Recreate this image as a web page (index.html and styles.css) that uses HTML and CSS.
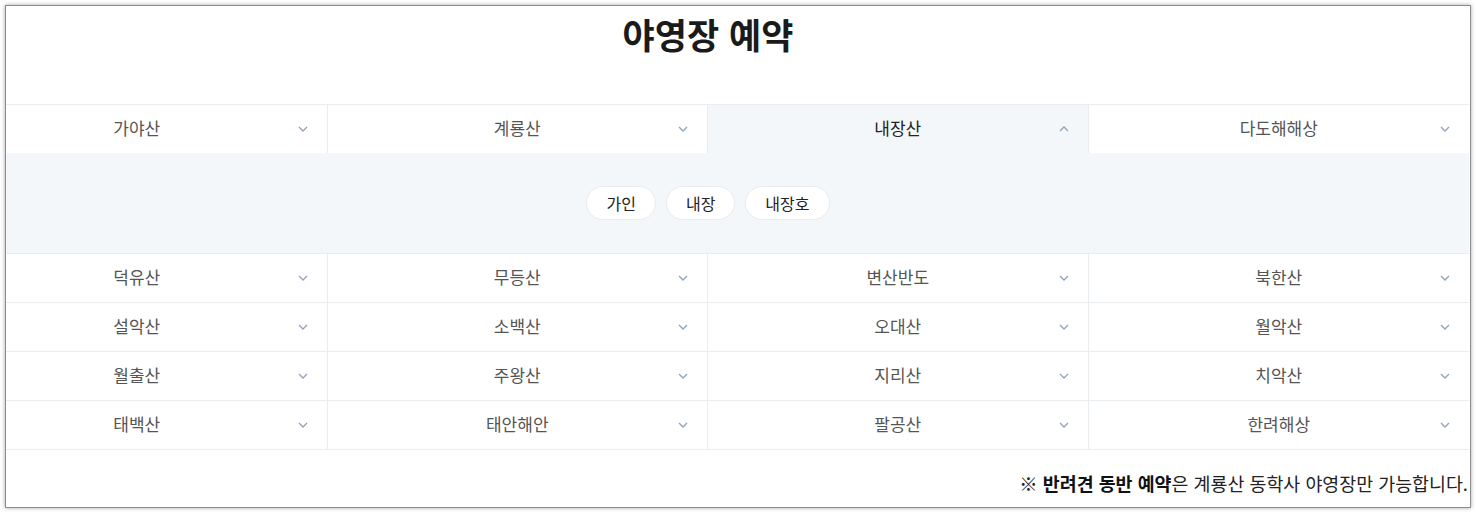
FILE: index.html
```html
<!DOCTYPE html>
<html lang="ko">
<head>
    <meta charset="UTF-8">
    <meta name="viewport" content="width=device-width, initial-scale=1.0">
    <title>야영장 예약</title>
    <link rel="stylesheet" href="styles.css">
</head>
<body>
    <div class="window">
        <div class="page">
            <h1 class="title">야영장 예약</h1>

            <div class="park-list">
                <div class="row is-open">
                    <div class="cell"><span></span><span class="label">가야산</span><svg class="chev" viewBox="0 0 10 6"><path d="M1 1l4 4 4-4"/></svg></div>
                    <div class="cell"><span></span><span class="label">계룡산</span><svg class="chev" viewBox="0 0 10 6"><path d="M1 1l4 4 4-4"/></svg></div>
                    <div class="cell active"><span></span><span class="label">내장산</span><svg class="chev" viewBox="0 0 10 6"><path d="M1 5l4-4 4 4"/></svg></div>
                    <div class="cell"><span></span><span class="label">다도해해상</span><svg class="chev" viewBox="0 0 10 6"><path d="M1 1l4 4 4-4"/></svg></div>
                </div>
                <div class="panel">
                    <button class="pill">가인</button>
                    <button class="pill">내장</button>
                    <button class="pill">내장호</button>
                </div>
                <div class="row">
                    <div class="cell"><span></span><span class="label">덕유산</span><svg class="chev" viewBox="0 0 10 6"><path d="M1 1l4 4 4-4"/></svg></div>
                    <div class="cell"><span></span><span class="label">무등산</span><svg class="chev" viewBox="0 0 10 6"><path d="M1 1l4 4 4-4"/></svg></div>
                    <div class="cell"><span></span><span class="label">변산반도</span><svg class="chev" viewBox="0 0 10 6"><path d="M1 1l4 4 4-4"/></svg></div>
                    <div class="cell"><span></span><span class="label">북한산</span><svg class="chev" viewBox="0 0 10 6"><path d="M1 1l4 4 4-4"/></svg></div>
                </div>
                <div class="row">
                    <div class="cell"><span></span><span class="label">설악산</span><svg class="chev" viewBox="0 0 10 6"><path d="M1 1l4 4 4-4"/></svg></div>
                    <div class="cell"><span></span><span class="label">소백산</span><svg class="chev" viewBox="0 0 10 6"><path d="M1 1l4 4 4-4"/></svg></div>
                    <div class="cell"><span></span><span class="label">오대산</span><svg class="chev" viewBox="0 0 10 6"><path d="M1 1l4 4 4-4"/></svg></div>
                    <div class="cell"><span></span><span class="label">월악산</span><svg class="chev" viewBox="0 0 10 6"><path d="M1 1l4 4 4-4"/></svg></div>
                </div>
                <div class="row">
                    <div class="cell"><span></span><span class="label">월출산</span><svg class="chev" viewBox="0 0 10 6"><path d="M1 1l4 4 4-4"/></svg></div>
                    <div class="cell"><span></span><span class="label">주왕산</span><svg class="chev" viewBox="0 0 10 6"><path d="M1 1l4 4 4-4"/></svg></div>
                    <div class="cell"><span></span><span class="label">지리산</span><svg class="chev" viewBox="0 0 10 6"><path d="M1 1l4 4 4-4"/></svg></div>
                    <div class="cell"><span></span><span class="label">치악산</span><svg class="chev" viewBox="0 0 10 6"><path d="M1 1l4 4 4-4"/></svg></div>
                </div>
                <div class="row">
                    <div class="cell"><span></span><span class="label">태백산</span><svg class="chev" viewBox="0 0 10 6"><path d="M1 1l4 4 4-4"/></svg></div>
                    <div class="cell"><span></span><span class="label">태안해안</span><svg class="chev" viewBox="0 0 10 6"><path d="M1 1l4 4 4-4"/></svg></div>
                    <div class="cell"><span></span><span class="label">팔공산</span><svg class="chev" viewBox="0 0 10 6"><path d="M1 1l4 4 4-4"/></svg></div>
                    <div class="cell"><span></span><span class="label">한려해상</span><svg class="chev" viewBox="0 0 10 6"><path d="M1 1l4 4 4-4"/></svg></div>
                </div>
            </div>

            <p class="notice">※ <strong>반려견 동반 예약</strong>은 계룡산 동학사 야영장만 가능합니다.</p>
        </div>
    </div>
</body>
</html>
```

FILE: styles.css
```css
html, body {
    margin: 0;
    padding: 0;
    background-color: #fff;
}
body {
    font-family: "Noto Sans CJK KR", "Noto Sans", sans-serif;
    color: #333;
}
.window {
    margin: 5px 5px 5px 5px;
    height: 501px;
    border: 1px solid #8c8c8c;
    box-shadow: 0 0 4px rgba(0, 0, 0, 0.35);
    overflow: hidden;
    background-color: #fff;
}
.page {
    width: 1522px;
    margin-left: -59px;
}
.title {
    margin: 4px 0 46px;
    font-size: 35px;
    line-height: 48px;
    font-weight: 700;
    color: #1a1a1a;
    text-align: center;
}
.park-list {
    border-top: 1px solid #eaedf0;
}
.row {
    display: grid;
    grid-template-columns: repeat(4, 1fr);
    border-bottom: 1px solid #eaedf0;
}
.row.is-open {
    border-bottom: none;
}
.cell {
    height: 48px;
    display: grid;
    grid-template-columns: 1fr auto 1fr;
    align-items: center;
    padding: 0 19px;
    border-right: 1px solid #eaedf0;
    background-color: #fff;
}
.cell:last-child {
    border-right: none;
}
.cell.active {
    background-color: #f4f7fa;
}
.label {
    margin-bottom: 3px;
    font-size: 17px;
    font-weight: 400;
    color: #555;
}
.cell.active .label {
    color: #222;
}
.chev {
    justify-self: end;
    width: 10px;
    height: 6px;
    fill: none;
    stroke: #8fa3b8;
    stroke-width: 1.3;
}
.panel {
    height: 100px;
    display: flex;
    justify-content: center;
    align-items: center;
    gap: 10px;
    background-color: #f4f7fa;
    border-bottom: 1px solid #eaedf0;
}
.pill {
    height: 34px;
    padding: 0 19px;
    border: 1px solid #e8ebef;
    border-radius: 17px;
    background-color: #fff;
    font-family: inherit;
    font-size: 16px;
    color: #222;
    cursor: pointer;
}
.notice {
    margin: 20px 0 0;
    padding-right: 1px;
    text-align: right;
    font-size: 18.4px;
    line-height: 27px;
    color: #222;
}
.notice strong {
    font-weight: 700;
    color: #111;
}
```
